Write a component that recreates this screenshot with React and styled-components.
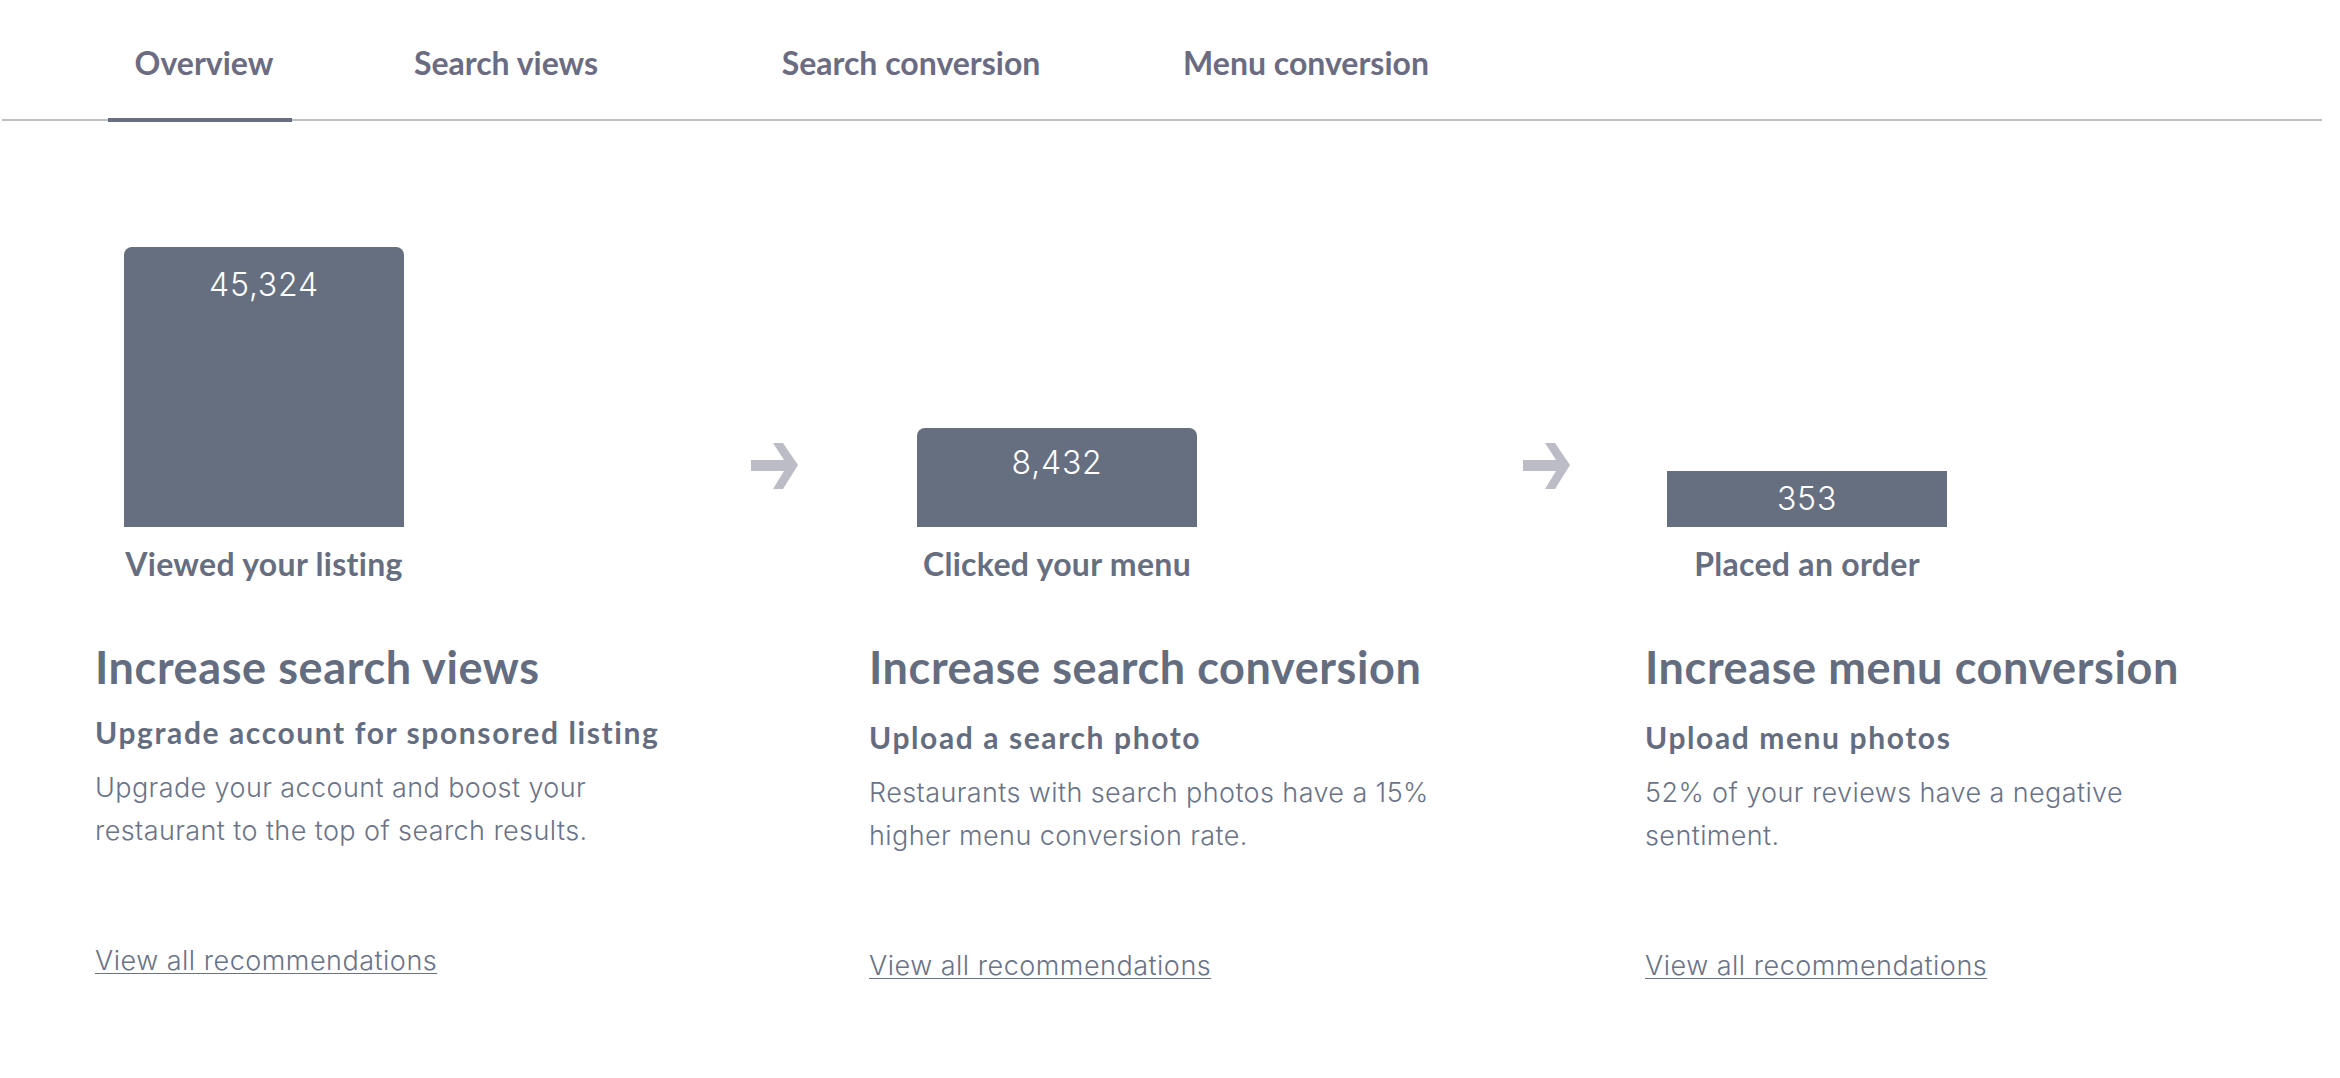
import React from "react"
import styled, { createGlobalStyle } from "styled-components"

const GlobalStyle = createGlobalStyle`
  html, body {
    margin: 0;
    padding: 0;
    background: #FFFFFF;
  }
  body {
    font-family: Lato, "Liberation Sans", sans-serif;
    color: #656D7E;
  }
`

const tabs = [
    { label: "Overview", w: 176, pl: 8, ml: 0, active: true },
    { label: "Search views", w: 230, pl: 0, ml: 99 },
    { label: "Search conversion", w: 300, pl: 0, ml: 140 },
    { label: "Menu conversion", w: 290, pl: 0, ml: 100 },
]

const stages = [
    { value: "45,324", label: "Viewed your listing", h: 280, pad: 19, ml: 0, round: true },
    { value: "8,432", label: "Clicked your menu", h: 99, pad: 16, ml: 118, round: true },
    { value: "353", label: "Placed an order", h: 56, pad: 9, ml: 96 },
]

const recs = [
    {
        title: "Increase search views",
        action: "Upgrade account for sponsored listing",
        text: ["Upgrade your account and boost your", "restaurant to the top of search results."],
        shift: 0,
    },
    {
        title: "Increase search conversion",
        action: "Upload a search photo",
        text: ["Restaurants with search photos have a 15%", "higher menu conversion rate."],
        shift: 5,
    },
    {
        title: "Increase menu conversion",
        action: "Upload menu photos",
        text: ["52% of your reviews have a negative", "sentiment."],
        shift: 5,
    },
]

const Arrow = ({ gap }) => (
    <ArrowBox $ml={gap}>
        <svg width="48" height="48" viewBox="0 0 48 48">
            <path d="M0 19 H33 L22 2 H32 L47 24 L32 48 H22 L33 30 H0 Z" fill="#BCBCC7" />
        </svg>
    </ArrowBox>
)

export default () => {

    const funnel = []
    stages.forEach((s, i) => {
        if (i > 0) funnel.push(<Arrow key={"a" + i} gap={i === 1 ? 347 : 326} />)
        funnel.push(
            <Stage key={s.label} $ml={s.ml}>
                <BarArea>
                    <Bar $h={s.h} $pad={s.pad} $round={s.round}>{s.value}</Bar>
                </BarArea>
                <StageLabel>{s.label}</StageLabel>
            </Stage>
        )
    })

    return (<>
        <GlobalStyle />
        <TabBar>
            {tabs.map(t => (
                <Tab key={t.label} $w={t.w} $pl={t.pl} $ml={t.ml} $active={t.active}>{t.label}</Tab>
            ))}
        </TabBar>
        <Funnel>
            {funnel}
        </Funnel>
        <Recommendations>
            {recs.map(r => (
                <Rec key={r.title}>
                    <RecTitle>{r.title}</RecTitle>
                    <RecAction $shift={r.shift}>{r.action}</RecAction>
                    <RecText>
                        {r.text.map(line => <span key={line}>{line}<br /></span>)}
                    </RecText>
                    <RecLink href="#">View all recommendations</RecLink>
                </Rec>
            ))}
        </Recommendations>
    </>)
}

const TabBar = styled.div`
    display: flex;
    margin: 0 18px 0 2px;
    padding-left: 106px;
    border-bottom: 2px solid #BFC0C6;
`

const Tab = styled.div`
    width: ${p => p.$w}px;
    margin-left: ${p => p.$ml}px;
    padding: 44px 0 36px ${p => p.$pl}px;
    margin-bottom: -3px;
    border-bottom: 4px solid ${p => p.$active ? "#666E7F" : "transparent"};
    box-sizing: content-box;
    text-align: center;
    font-size: 32px;
    line-height: 38px;
    font-weight: 700;
    color: #6B6C82;
    white-space: nowrap;
`

const Funnel = styled.div`
    display: flex;
    align-items: flex-start;
    margin-top: 125px;
    padding-left: 124px;
`

const Stage = styled.div`
    width: 280px;
    margin-left: ${p => p.$ml}px;
    display: flex;
    flex-direction: column;
    align-items: center;
`

const ArrowBox = styled.div`
    width: 48px;
    height: 48px;
    margin-top: 195px;
    margin-left: ${p => p.$ml}px;
    svg { display: block; }
`

const BarArea = styled.div`
    height: 281px;
    width: 100%;
    display: flex;
    align-items: flex-end;
`

const Bar = styled.div`
    width: 100%;
    height: ${p => p.$h}px;
    box-sizing: border-box;
    padding-top: ${p => p.$pad}px;
    background: #666F80;
    border-radius: ${p => p.$round ? "8px 8px 0 0" : "0"};
    text-align: center;
    color: #FFFFFF;
    font-family: Inter, "Liberation Sans", sans-serif;
    font-size: 32px;
    line-height: 38px;
    font-weight: 300;
    letter-spacing: 0.8px;
`

const StageLabel = styled.div`
    margin-top: 18px;
    font-size: 32px;
    line-height: 38px;
    font-weight: 700;
    letter-spacing: 0.3px;
    color: #666E7F;
    white-space: nowrap;
`

const Recommendations = styled.div`
    display: grid;
    grid-template-columns: 774px 776px 1fr;
    padding-left: 95px;
    margin-top: 57px;
`

const Rec = styled.div`
    display: flex;
    flex-direction: column;
    align-items: flex-start;
`

const RecTitle = styled.h2`
    margin: 0;
    font-size: 45px;
    line-height: 54px;
    font-weight: 700;
    letter-spacing: 0.6px;
    color: #646D7F;
    white-space: nowrap;
`

const RecAction = styled.h3`
    margin: ${p => 21 + p.$shift}px 0 0;
    font-size: 30px;
    line-height: 35px;
    font-weight: 700;
    letter-spacing: 1.6px;
    color: #646D7F;
    white-space: nowrap;
`

const RecText = styled.p`
    margin: 16px 0 0;
    font-family: Inter, "Liberation Sans", sans-serif;
    font-size: 27px;
    line-height: 43px;
    font-weight: 300;
    letter-spacing: 0.4px;
    color: #6A7387;
`

const RecLink = styled.a`
    margin-top: 93px;
    font-family: Inter, "Liberation Sans", sans-serif;
    font-size: 27px;
    line-height: 31px;
    font-weight: 300;
    letter-spacing: 0.5px;
    color: #6A7387;
    text-decoration: underline;
    text-decoration-thickness: 1px;
    text-underline-offset: 3px;
`
